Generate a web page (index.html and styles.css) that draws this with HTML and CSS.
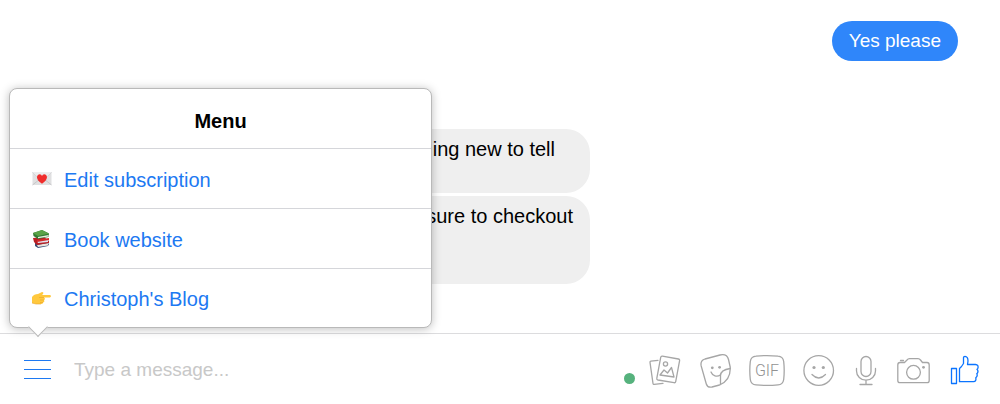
FILE: index.html
```html
<!DOCTYPE html>
<html lang="en">
<head>
<meta charset="utf-8">
<meta name="viewport" content="width=device-width, initial-scale=1">
<title>Messenger</title>
<link rel="stylesheet" href="styles.css">
</head>
<body>
<main class="thread">
  <p class="bubble bubble-sent">Yes please</p>
  <div class="received">
    <p class="bubble bubble-received two-lines">thing new to tell</p>
    <p class="bubble bubble-received three-lines">sure to checkout</p>
  </div>
</main>
<form class="composer">
  <nav class="menu" aria-labelledby="menu-title">
    <h2 class="menu-title" id="menu-title">Menu</h2>
    <a class="menu-item" href="#subscription">
      <svg class="emoji" viewBox="0 0 20 20" aria-hidden="true">
        <rect x="0.500" y="2.500" width="19" height="12.500" fill="#e0e0e1"/>
        <path d="M.5 2.500L8 9L.5 15M19.500 2.500L12 9L19.500 15" fill="none" stroke="#c0c0c2" stroke-width=".8"/>
        <path d="M.5 2.500H19.500L10 11Z" fill="#ebebec"/>
        <path d="M10 13.800C3 9.500 4.500 4.300 7.800 4.300Q9.500 4.500 10 6Q10.500 4.500 12.200 4.300C15.500 4.300 17 9.500 10 13.800Z" fill="#f02d2c"/>
      </svg>
      <span>Edit subscription</span>
    </a>
    <a class="menu-item" href="#book">
      <svg class="emoji" viewBox="0 0 20 20" aria-hidden="true">
        <path d="M3 13L13 11L17 14L16 16L6 18L3 16Z" fill="#374c75"/>
        <path d="M5 15L16 13V15.500L6 17Z" fill="#e8e5df"/>
        <path d="M1 8L12 7L17 11V13L5 15L2 12Z" fill="#b91f24"/>
        <path d="M5 11L16 9V12L6 13Z" fill="#dfe4ef"/>
        <path d="M5 10L17 8V10L5 12Z" fill="#d32929"/>
        <path d="M1 3L10 0L17 3.500L16.500 7L6 9L1.500 6Z" fill="#347c35"/>
        <path d="M6 7L16.500 5V6.500L6 8.300Z" fill="#e9eee2"/>
        <path d="M1 3L10 0L17 3.500L6 6Z" fill="#5ba348"/>
      </svg>
      <span>Book website</span>
    </a>
    <a class="menu-item" href="#blog">
      <svg class="emoji" viewBox="0 0 20 20" aria-hidden="true">
        <path d="M0 8Q2 5 6 5L10 3Q12 3 11 5L10 6H18Q20 7 18 8.500H12Q14 10 12 11Q13 13 11 13.500Q11 15 9 15H4L0 14Z" fill="#ffc83d"/>
        <path d="M7 8.500H12M8 11H12M8 13.500H11M0 14L4 15H9" fill="none" stroke="#e8a52c" stroke-width=".6"/>
      </svg>
      <span>Christoph's Blog</span>
    </a>
  </nav>
  <button class="menu-button" type="button" aria-label="Menu">
    <span class="line"></span><span class="line"></span><span class="line"></span>
  </button>
  <input class="message" type="text" placeholder="Type a message..." aria-label="Type a message">
  <span class="status"></span>
  <div class="tools">
    <button class="tool" type="button" aria-label="Photos">
      <svg width="32" height="38" viewBox="0 0 32 38">
        <path d="M9 10.300L1.800 11.200Q.8 11.400 1 12.400L4 33.500Q4.200 34.600 5.200 34.400L14 33.300"/>
        <path d="M13.400 6.200L29.400 9Q30.900 9.300 30.600 10.600L26.700 31.600Q26.400 33 25 32.700L9 30Q7.500 29.700 7.800 28.400L11.700 7.300Q12 6 13.400 6.200Z"/>
        <circle cx="16.500" cy="14" r="2.100"/>
        <path d="M11 25L15 20L18.500 23L22.500 17.500L25 27Z"/>
      </svg>
    </button>
    <button class="tool" type="button" aria-label="Stickers">
      <svg width="32" height="38" viewBox="0 0 32 38">
        <path d="M6 9L21 5Q28 3.500 29.500 9.500L31.200 17Q32 30 20.500 35L13 37Q8.500 38 7.300 34L2.200 16Q1 10.500 6 9Z"/>
        <path d="M31.200 18.500C25 19.500 21.500 22 21.500 25.500V34.500M12 22C13.500 26 18 27.500 21.500 24.800"/>
        <circle class="dot" cx="13.300" cy="17.800" r="1.400"/><circle class="dot" cx="20.600" cy="17.300" r="1.400"/>
      </svg>
    </button>
    <button class="tool" type="button" aria-label="GIF">
      <svg width="36" height="38" viewBox="0 0 36 38">
        <path d="M7 6.200Q18 5 29 6.200Q34 6.500 34.700 11.500Q35.700 20.500 34.700 29.500Q34 34.500 29 34.900Q18 36 7 34.900Q2 34.500 1.300 29.500Q.3 20.500 1.300 11.500Q2 6.500 7 6.200Z"/>
        <text class="gif" x="18" y="26" text-anchor="middle">GIF</text>
      </svg>
    </button>
    <button class="tool" type="button" aria-label="Emoji">
      <svg width="32" height="38" viewBox="0 0 32 38">
        <circle cx="15.700" cy="20.500" r="14.800"/>
        <path d="M9 24.500Q15.700 31.500 22.500 24.500"/>
        <circle class="dot" cx="11" cy="17.500" r="1.600"/><circle class="dot" cx="20.300" cy="17.500" r="1.600"/>
      </svg>
    </button>
    <button class="tool" type="button" aria-label="Voice">
      <svg width="24" height="38" viewBox="0 0 24 38">
        <rect x="8" y="6.500" width="10" height="20" rx="5"/>
        <path d="M3.500 18.500V21A9.500 9.200 0 0 0 22.500 21V18.500M13 30.200V34.500M7 34.500H19"/>
      </svg>
    </button>
    <button class="tool" type="button" aria-label="Camera">
      <svg width="36" height="38" viewBox="0 0 36 38">
        <path d="M5 12.500H9.500L12 10Q13 8.700 14.500 8.700H23Q24.500 8.700 25.500 10L27.500 12.500H32Q34.200 12.500 34.200 15V30.500Q34.200 32.700 32 32.700H5Q2.800 32.700 2.800 30.500V15Q2.800 12.500 5 12.500ZM5.500 10.500H8.500"/>
        <circle cx="18.500" cy="22.300" r="6.900"/>
        <circle class="dot" cx="28.500" cy="17.300" r="1.400"/>
      </svg>
    </button>
    <button class="tool tool-like" type="button" aria-label="Like">
      <svg width="30" height="38" viewBox="0 0 30 38">
        <rect x="2.500" y="18.500" width="5" height="15"/>
        <path d="M10.500 18.500L12.500 16.500L14.500 13.500V7.500Q14.500 6.300 16 6.300Q19 6.500 19 11L18.500 14.500H26.500Q29.500 14.800 29 17.800Q28.800 18.800 28 19.300Q30 21.500 27.800 23.800Q29 26 26.800 27.800Q27.500 31.500 24.500 31.700H10.500Z"/>
      </svg>
    </button>
  </div>
</form>
</body>
</html>
```
FILE: styles.css
```css
* {
  box-sizing: border-box;
}

body {
  margin: 0;
  min-height: 100vh;
  display: flex;
  flex-direction: column;
  background: #fff;
  color: #000;
  font-family: "Liberation Sans", Arial, sans-serif;
  font-size: 20px;
  line-height: 24px;
}

.thread {
  flex: 1;
  display: flex;
  flex-direction: column;
  gap: 68px;
  padding: 21px 42px 48px 80px;
}

.bubble {
  margin: 0;
  padding: 8px 17px;
  border-radius: 24px;
}

.bubble-sent {
  align-self: flex-end;
  background: #2f86fa;
  color: #fff;
  font-size: 19px;
}

.received {
  display: flex;
  flex-direction: column;
  gap: 3px;
  width: 510px;
  max-width: 100%;
}

.bubble-received {
  background: #efefef;
  text-align: right;
}

.two-lines {
  min-height: 64px;
  padding-right: 35px;
}

.three-lines {
  min-height: 88px;
}

.composer {
  position: relative;
  display: flex;
  align-items: center;
  gap: 14px;
  min-height: 71px;
  padding: 0 21px 0 24px;
  border-top: 1px solid #dcdcde;
}

.menu {
  position: absolute;
  left: 9px;
  bottom: calc(100% + 6px);
  width: 423px;
  background: #fff;
  border: 1px solid #b9b9b9;
  border-radius: 8px;
  box-shadow: 0 1px 10px rgba(0, 0, 0, 0.26);
}

.menu::after {
  content: "";
  position: absolute;
  left: 21px;
  bottom: -7px;
  width: 13px;
  height: 13px;
  background: #fff;
  border: solid #b9b9b9;
  border-width: 0 1px 1px 0;
  transform: rotate(45deg);
}

.menu-title {
  margin: 0;
  padding: 20px 0 15px;
  font-size: 20px;
  line-height: 24px;
  text-align: center;
}

.menu-item {
  display: flex;
  align-items: center;
  gap: 12px;
  height: 60px;
  padding: 2px 22px 0;
  border-top: 1px solid #d5d6da;
  color: #1d79f2;
  text-decoration: none;
}

.menu-item:last-child {
  height: 59px;
}

.emoji {
  width: 20px;
  height: 20px;
}

.menu-button {
  display: flex;
  flex-direction: column;
  gap: 8px;
  width: 27px;
  padding: 0;
  border: 0;
  background: none;
}

.line {
  height: 1px;
  background: #1d79f2;
}

.message {
  flex: 1;
  min-width: 0;
  padding: 2px 9px 0;
  border: 0;
  outline: 0;
  background: none;
  color: #000;
  font: inherit;
  font-size: 19px;
}

.message::placeholder {
  color: #c8c8c8;
  opacity: 1;
}

.status {
  width: 11px;
  height: 11px;
  margin-top: 18px;
  border-radius: 50%;
  background: #56b27d;
}

.tools {
  display: flex;
  align-items: center;
  gap: 18px;
}

.tool {
  display: block;
  padding: 0;
  border: 0;
  background: none;
  color: #a6a6a6;
}

.tool-like {
  color: #0b74ff;
}

.tool svg {
  display: block;
  fill: none;
  stroke: currentColor;
  stroke-width: 1.3;
  stroke-linecap: round;
  stroke-linejoin: round;
}

.tool .dot {
  fill: currentColor;
  stroke: none;
}

.gif {
  fill: #929292;
  stroke: none;
  font-family: Roboto, sans-serif;
  font-size: 16px;
  font-weight: 300;
}
```
